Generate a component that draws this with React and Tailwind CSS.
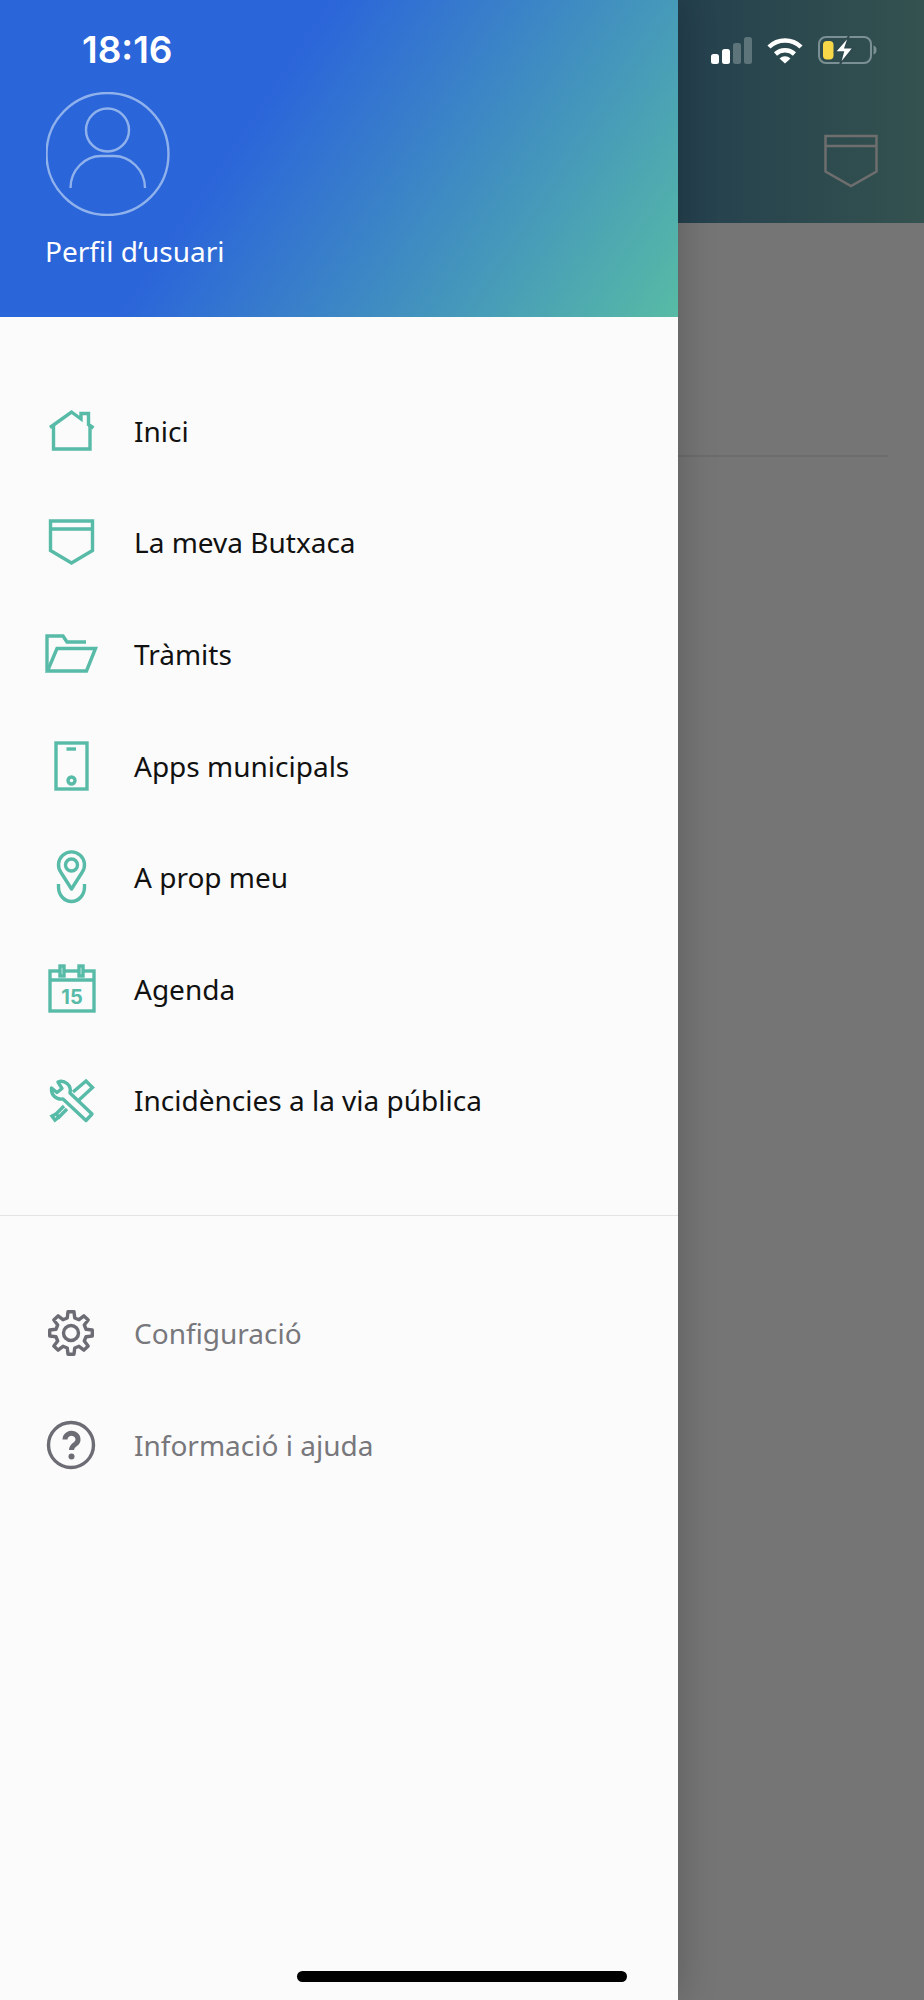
import React from 'react';

const Icon = ({ children, className = 'text-[#57bba8]' }) => (
  <svg viewBox="0 0 56 56" fill="none" stroke="currentColor" strokeWidth="3.4" className={`w-14 h-14 shrink-0 ${className}`}>
    {children}
  </svg>
);

const HomeIcon = () => (
  <Icon>
    <path d="M7 24.5 L28.5 9 L38 16 V10.5 H45.5 V21.5 L50.5 25" />
    <path d="M10.5 22 V46 H47 V22" />
  </Icon>
);

const PocketIcon = () => (
  <Icon>
    <path d="M7.5 7 H49.5 V36.5 L28.5 49 L7.5 36.5 Z M7.5 15 H49.5" />
  </Icon>
);

const FolderIcon = () => (
  <Icon>
    <path d="M4 45 V10 H20 L24 16 H43" />
    <path d="M4.5 45 L14 22.5 H52.5 L43.5 45 Z" />
  </Icon>
);

const PhoneIcon = () => (
  <Icon>
    <rect x="13" y="5" width="31" height="46" />
    <path d="M23.5 11 H33" />
    <circle cx="28.5" cy="42.5" r="3.5" />
  </Icon>
);

const PinIcon = () => (
  <Icon>
    <path d="M28.5 40 L18 23.5 A13 13 0 1 1 39 23.5 Z" strokeLinejoin="round" />
    <circle cx="28.5" cy="16" r="6" />
    <path d="M15.5 35 V38 A13 14.5 0 0 0 41.5 38 V35" />
  </Icon>
);

const CalendarIcon = () => (
  <Icon>
    <rect x="7" y="10" width="44" height="40" />
    <path d="M7 19 H51" />
    <rect x="17" y="5" width="4" height="10" fill="#fbfbfb" />
    <rect x="36" y="5" width="4" height="10" fill="#fbfbfb" />
    <text x="29" y="43" textAnchor="middle" stroke="none" fill="currentColor" className="font-['Inter',sans-serif] font-bold text-[20px]">15</text>
  </Icon>
);

const ToolsIcon = () => (
  <Icon>
    <path d="M20 27 C13 28 8 23 8.5 16 L14 20.5 L19 16.5 L15 10 C21 7.5 29 13 27 21 L49 42 L43 48.5 Z" strokeLinejoin="round" />
    <path d="M30 20 L43 9 L49.5 15.5 L36 28" />
    <path d="M21 34 L13 42 L16 45 L24 37" />
    <path d="M13 42 L9 44 L12 48 L16 45" />
  </Icon>
);

// engranatge de 8 dents, una a dalt
const gearPath = Array.from({ length: 8 }, (_, i) => {
  const base = (i * Math.PI) / 4 - Math.PI / 2;
  const pt = (r, deg) => {
    const a = base + (deg * Math.PI) / 180;
    return `${(28 + r * Math.cos(a)).toFixed(2)} ${(28 + r * Math.sin(a)).toFixed(2)}`;
  };
  return `${i === 0 ? 'M' : 'L'}${pt(15.5, -14)} L${pt(21.5, -8)} L${pt(21.5, 8)} L${pt(15.5, 14)}`;
}).join(' ') + ' Z';

const GearIcon = () => (
  <Icon className="text-[#6c6c75]">
    <path d={gearPath} strokeLinejoin="round" />
    <circle cx="28" cy="28" r="7.5" />
  </Icon>
);

const HelpIcon = () => (
  <Icon className="text-[#6c6c75]">
    <circle cx="28" cy="28" r="22.5" />
    <path d="M22 22.5 A6.5 6 0 1 1 32.5 27 C29.5 29 28.5 30 28.5 33" strokeWidth="5" />
    <circle cx="28.5" cy="39.5" r="3" fill="currentColor" stroke="none" />
  </Icon>
);

const menuItems = [
  { label: 'Inici', icon: <HomeIcon /> },
  { label: 'La meva Butxaca', icon: <PocketIcon /> },
  { label: 'Tràmits', icon: <FolderIcon /> },
  { label: 'Apps municipals', icon: <PhoneIcon /> },
  { label: 'A prop meu', icon: <PinIcon /> },
  { label: 'Agenda', icon: <CalendarIcon /> },
  { label: 'Incidències a la via pública', icon: <ToolsIcon /> },
];

const MenuRow = ({ icon, label, muted }) => (
  <div className={`flex items-center gap-[35px] pl-[43px] h-[111.6px] text-[28px] ${muted ? 'text-[#77777c]' : 'text-[#111111]'}`}>
    {icon}
    <span>{label}</span>
  </div>
);

const StatusIcons = () => (
  <div className="flex items-center h-7">
    {/* cobertura */}
    <svg width="42" height="27" viewBox="0 0 42 27" className="mr-[14px]">
      <rect x="0" y="17" width="8" height="10" rx="2.5" fill="#fff" />
      <rect x="11" y="12" width="8" height="15" rx="2.5" fill="#fff" />
      <rect x="22" y="6" width="8" height="21" rx="2.5" fill="#5c747a" />
      <rect x="33" y="0" width="8" height="27" rx="2.5" fill="#5c747a" />
    </svg>
    {/* wifi */}
    <svg width="36" height="27" viewBox="0 0 36 27" fill="none" className="mr-[15px]">
      <path d="M2 10 A23 23 0 0 1 34 10" stroke="#fff" strokeWidth="4.5" />
      <path d="M8.5 17 A14 14 0 0 1 27.5 17" stroke="#fff" strokeWidth="4.5" />
      <path d="M18 26.5 L12.5 21.5 A8 8 0 0 1 23.5 21.5 Z" fill="#fff" />
    </svg>
    {/* bateria */}
    <svg width="60" height="30" viewBox="0 0 60 30" fill="none">
      <rect x="1" y="2" width="52" height="26" rx="7" stroke="#7b9094" strokeWidth="2" />
      <rect x="5" y="6" width="10.5" height="18.5" rx="4" fill="#f7d748" />
      <path d="M55.5 10.5 C58 11 58.5 13 58.5 15 C58.5 17 58 19 55.5 19.5 Z" fill="#7b9094" />
      <path d="M31 1 L17 17 H25.3 L22 29.3 L35.3 12.7 H27 Z" fill="#fff" stroke="#30494f" strokeWidth="1.5" />
    </svg>
  </div>
);

export default function App() {
  return (
    <div className="relative flex w-[924px] h-[2000px] overflow-hidden font-['Noto_Sans',sans-serif] bg-[#757575]">
      {/* Menu lateral */}
      <div className="relative z-10 flex flex-col w-[678px] shrink-0 bg-[#fbfbfb] shadow-[0_0_36px_rgba(0,0,0,0.22)]">
        <div className="flex flex-col h-[317px] pl-[46px] bg-[linear-gradient(124deg,#2b65da_37%,#57bba5_100%)]">
          <div className="pt-[30px] pl-[36px] text-[37px] leading-[40px] font-semibold text-white font-['Inter',sans-serif]">18:16</div>
          <svg width="124" height="124" viewBox="0 0 124 124" fill="none" stroke="#8fb2ec" strokeWidth="2.4" className="mt-[22px]">
            <circle cx="61.5" cy="62" r="61" />
            <circle cx="61.5" cy="38" r="21.5" />
            <path d="M24.5 96 C24.5 78 39 64 55 64 H68 C84 64 99 78 99 96" />
          </svg>
          <span className="mt-[16px] -ml-[1px] text-[28px] leading-[38px] text-white">Perfil d’usuari</span>
        </div>

        <div className="pt-[58px] pb-[59px] border-b border-[#e4e4e4]">
          {menuItems.map((item) => (
            <MenuRow key={item.label} icon={item.icon} label={item.label} />
          ))}
        </div>

        <div className="pt-[61px]">
          <MenuRow muted label="Configuració" icon={<GearIcon />} />
          <MenuRow muted label="Informació i ajuda" icon={<HelpIcon />} />
        </div>
      </div>

      {/* Contingut enfosquit */}
      <div className="flex flex-col flex-1">
        <div className="flex flex-col items-end h-[223px] pt-[36px] pr-[46px] bg-[linear-gradient(90deg,#24404e,#34524f)]">
          <StatusIcons />
          <svg width="54" height="54" viewBox="0 0 54 54" fill="none" stroke="#6e6e6e" strokeWidth="2.5" className="mt-[70px]">
            <path d="M1.5 2 H52.5 V37.5 L27 52 L1.5 37.5 Z M1.5 12 H52.5" />
          </svg>
        </div>
        <div className="mt-[232px] mr-[36px] h-0.5 bg-[#6c6c6c]" />
      </div>

      <div className="absolute left-[297px] top-[1971px] w-[330px] h-[11px] rounded-full bg-black z-20" />
    </div>
  );
}
